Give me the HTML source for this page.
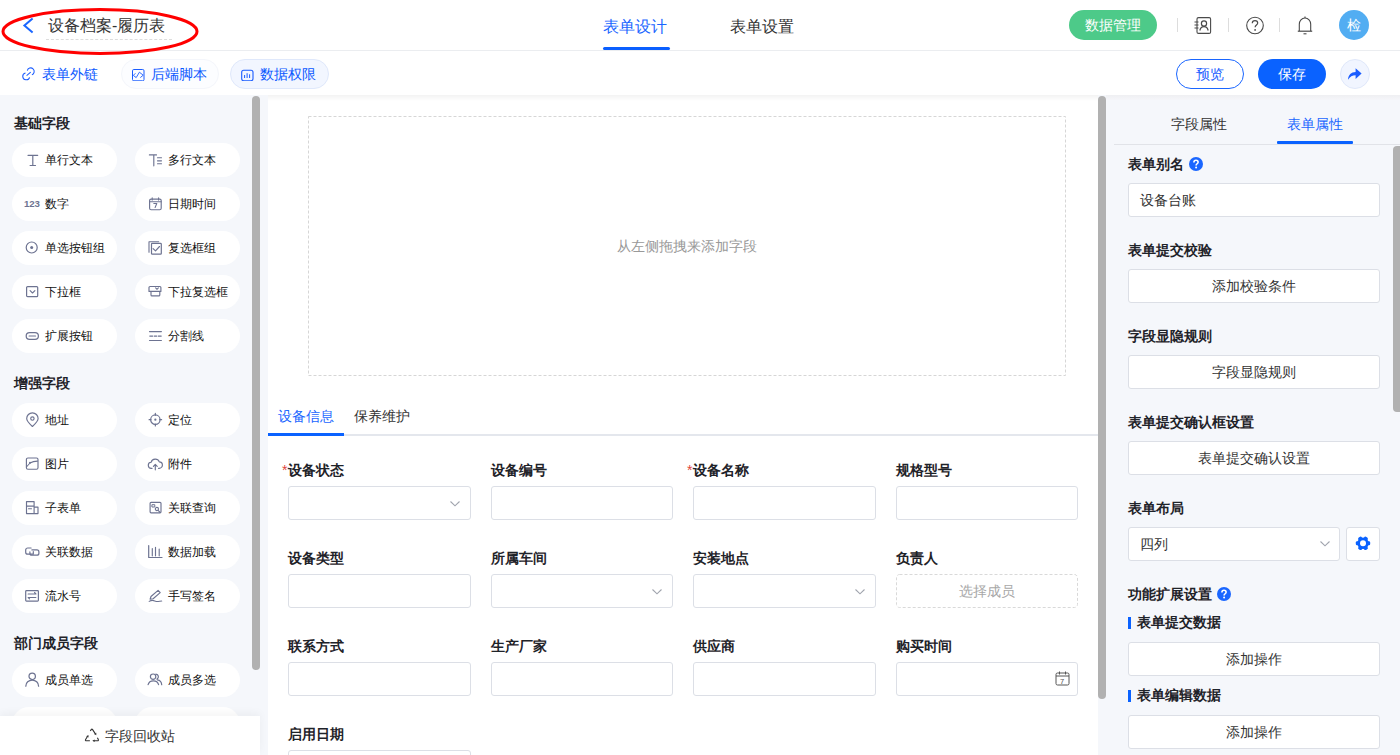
<!DOCTYPE html>
<html><head><meta charset="utf-8">
<style>
*{box-sizing:border-box;margin:0;padding:0}
html,body{width:1400px;height:755px;overflow:hidden;background:#fff;font-family:"Liberation Sans",sans-serif;color:#333}
.abs{position:absolute}
#hdr{position:absolute;left:0;top:0;width:1400px;height:51px;border-bottom:1px solid #ebedf0;background:#fff}
#tb{position:absolute;left:0;top:51px;width:1400px;height:44px;background:#fff}
#left{position:absolute;left:0;top:95px;width:268px;height:660px;background:#f5f7fb}
#mid{position:absolute;left:268px;top:95px;width:830px;height:660px;background:#fff}
#right{position:absolute;left:1098px;top:95px;width:302px;height:660px;background:#f5f7fb}
.sb{position:absolute;background:#b1b1b1;border-radius:4px;width:8px;z-index:5}
.sec{position:absolute;left:14px;font-size:14px;font-weight:bold;color:#1f2329;line-height:20px}
.pill{position:absolute;width:105px;height:34px;border-radius:17px;background:#fff;font-size:12px;color:#111;line-height:34px}
.pill .ic{position:absolute;left:12px;top:9px;width:15px;height:15px;overflow:visible}
.pill span{position:absolute;left:33px;top:0}
.lbl{position:absolute;font-size:14px;font-weight:bold;color:#1f2329;line-height:20px}
.inp{position:absolute;height:34px;border:1px solid #dcdfe6;border-radius:3px;background:#fff}
.rlbl{position:absolute;left:1128px;font-size:14px;font-weight:bold;color:#1f2329;line-height:20px}
.rbtn{position:absolute;left:1128px;width:252px;height:34px;border:1px solid #dcdfe6;border-radius:3px;background:#fff;text-align:center;line-height:32px;font-size:14px;color:#333}
</style></head><body>
<div id="hdr">

<svg class="abs" style="left:22;top:17px;left:22px" width="12" height="17" viewBox="0 0 12 17"><path d="M10.6 1.6 L2.4 8.5 L10.6 15.4" fill="none" stroke="#1a66ff" stroke-width="2"/></svg>
<div class="abs" style="left:48px;top:15px;font-size:16px;line-height:22px;color:#333">设备档案-履历表</div>
<div class="abs" style="left:46px;top:39px;width:126px;border-top:1px dashed #ddd"></div>
<div class="abs" style="left:603px;top:15px;font-size:16.25px;line-height:22px;color:#1a66ff">表单设计</div>
<div class="abs" style="left:603px;top:47px;width:67px;height:3px;border-radius:2px;background:#0a5fff"></div>
<div class="abs" style="left:730px;top:15px;font-size:16.25px;line-height:22px;color:#333">表单设置</div>
<div class="abs" style="left:1069px;top:10px;width:88px;height:30px;border-radius:15px;background:#4dca89;color:#fff;font-size:14px;font-weight:500;line-height:30px;text-align:center">数据管理</div>
<div class="abs" style="left:1177px;top:18px;width:1px;height:14px;background:#ddd"></div>
<div class="abs" style="left:1228px;top:18px;width:1px;height:14px;background:#ddd"></div>
<div class="abs" style="left:1279px;top:18px;width:1px;height:14px;background:#ddd"></div>
<svg class="abs" style="left:1193px;top:16px" width="20" height="19" viewBox="0 0 20 19"><rect x="4" y="1.6" width="13.6" height="15.8" rx="1.5" fill="none" stroke="#4a4a4a" stroke-width="1.1"/><path d="M1.5 6h4M1.5 9h4M1.5 12h4" stroke="#4a4a4a" stroke-width="1.2"/><circle cx="11" cy="7.5" r="2.6" fill="none" stroke="#4a4a4a" stroke-width="1.2"/><path d="M6.8 14.5c0.6-2.6 2.2-3.8 4.2-3.8s3.6 1.2 4.2 3.8" fill="none" stroke="#4a4a4a" stroke-width="1.2"/></svg>
<svg class="abs" style="left:1245px;top:16px" width="20" height="20" viewBox="0 0 20 20"><circle cx="10" cy="9.5" r="8.3" fill="none" stroke="#4a4a4a" stroke-width="1.1"/><path d="M7.3 7.3c0-1.6 1.2-2.6 2.7-2.6s2.7 1 2.7 2.4c0 1.9-2.6 2-2.6 4.2" fill="none" stroke="#4a4a4a" stroke-width="1.2"/><circle cx="10.1" cy="13.9" r="0.9" fill="#4a4a4a"/></svg>
<svg class="abs" style="left:1296px;top:15px" width="18" height="21" viewBox="0 0 18 21"><path d="M9 1.5v1.5" stroke="#4a4a4a" stroke-width="1.1"/><path d="M3.3 16V9.3C3.3 5.6 5.8 3 9 3s5.7 2.6 5.7 6.3V16" fill="none" stroke="#4a4a4a" stroke-width="1.1"/><path d="M1.8 16.2h14.4" stroke="#4a4a4a" stroke-width="1.2"/><path d="M7.5 18.8h3" stroke="#4a4a4a" stroke-width="1.1"/></svg>
<div class="abs" style="left:1339px;top:10px;width:30px;height:30px;border-radius:15px;background:#52adf2;color:#fff;font-size:14px;font-weight:500;line-height:30px;text-align:center">检</div>
</div>
<div id="tb">
<svg class="abs" style="left:18px;top:11px" width="40" height="24" viewBox="0 0 40 24"><path d="M9.3 8.6A3.5 3.5 0 1 1 13.9 12.7M7.5 10.9A3.5 3.5 0 1 0 11.6 15.3M8.6 13.7 12.7 10.2" fill="none" stroke="#1a5cff" stroke-width="1.05"/></svg>
<div class="abs" style="left:42px;top:13px;font-size:14px;line-height:20px;color:#0a58ff">表单外链</div>
<div class="abs" style="left:121px;top:8px;width:98px;height:30px;border-radius:15px;background:#fcfdff;border:1px solid #f4f6fb"></div>
<svg class="abs" style="left:132px;top:17px" width="13" height="13" viewBox="0 0 13 13"><rect x="0.5" y="1.5" width="11.5" height="11.3" rx="1.3" fill="none" stroke="#1a5cff" stroke-width="1"/><path d="M3.4 5.3 1.3 7.4 4.2 9.6 7.4 4.2 11.2 7.2 8.3 9.6" fill="none" stroke="#1a5cff" stroke-width="0.9"/></svg>
<div class="abs" style="left:151px;top:13px;font-size:14px;line-height:20px;color:#0a58ff">后端脚本</div>
<div class="abs" style="left:230px;top:8px;width:99px;height:30px;border-radius:15px;background:#f2f6ff;border:1px solid #dfe8fb"></div>
<svg class="abs" style="left:241px;top:17px" width="13" height="13" viewBox="0 0 13 13"><rect x="0.7" y="2.3" width="11.3" height="10.4" rx="2" fill="none" stroke="#1a5cff" stroke-width="1.1"/><path d="M3.6 7v3M6.1 5.2v4.8M8.6 6.3v3.7" fill="none" stroke="#1a5cff" stroke-width="1"/></svg>
<div class="abs" style="left:260px;top:13px;font-size:14px;line-height:20px;color:#0a58ff">数据权限</div>
<div class="abs" style="left:1176px;top:8px;width:68px;height:30px;border-radius:15px;background:#fff;border:1px solid #1a66ff;color:#1a5cff;font-size:14px;font-weight:500;line-height:28px;text-align:center">预览</div>
<div class="abs" style="left:1258px;top:8px;width:68px;height:30px;border-radius:15px;background:#0a62ff;color:#fff;font-size:14px;font-weight:500;line-height:30px;text-align:center">保存</div>
<div class="abs" style="left:1340px;top:8px;width:30px;height:30px;border-radius:15px;background:#f1f5ff;border:1px solid #e0e8fa"></div>
<svg class="abs" style="left:1347px;top:16px" width="16" height="14" viewBox="0 0 16 14"><path d="M1 12.8C1.3 7.6 4.2 5 8.6 4.9V1.3L14.6 6.6 8.6 11.9V8.3C5.4 8.3 3 9.6 1 12.8Z" fill="#1a5cff"/></svg>
</div>
<!--LEFT--><div id="leftbg" style="position:absolute;left:0;top:95px;width:268px;height:660px;background:#f5f7fb"></div>
<div class="sec" style="top:113px">基础字段</div>
<div class="pill" style="left:12px;top:143px"><svg class="ic" viewBox="0 0 15 15" width="15" height="15"><g transform="translate(0.5 0.5)"><path d="M3.5 2.8H13.2M8.3 2.8V13M5.6 13H11" fill="none" stroke="#6d7391" stroke-width="1.2" stroke-linecap="round" stroke-linejoin="round"/></g></svg><span>单行文本</span></div>
<div class="pill" style="left:135px;top:143px"><svg class="ic" viewBox="0 0 15 15" width="15" height="15"><g transform="translate(0.5 0.5)"><path d="M1.9 2.4H9M6.3 2.4V13.3M10 5.2H14M10 8.3H14M10 11.2H14" fill="none" stroke="#6d7391" stroke-width="1.15" stroke-linecap="round" stroke-linejoin="round"/></g></svg><span>多行文本</span></div>
<div class="pill" style="left:12px;top:187px"><div style="position:absolute;left:12px;top:-0.5px;font-family:Liberation Sans;font-weight:bold;font-size:9.7px;line-height:34px;color:#6d7391;letter-spacing:-0.2px">123</div><span>数字</span></div>
<div class="pill" style="left:135px;top:187px"><svg class="ic" viewBox="0 0 15 15" width="15" height="15"><g transform="translate(0.5 0.5)"><rect x="2.1" y="2.6" width="11.6" height="10.6" rx="1.5" fill="none" stroke="#6d7391" stroke-width="1.15"/><path d="M4.7 1.2V3.6M11.1 1.2V3.6M2.1 5.2H13.7M6.3 7H9.3L7.6 11" fill="none" stroke="#6d7391" stroke-width="1.05" stroke-linecap="round" stroke-linejoin="round"/></g></svg><span>日期时间</span></div>
<div class="pill" style="left:12px;top:231px"><svg class="ic" viewBox="0 0 15 15" width="15" height="15"><g transform="translate(0.5 0.5)"><circle cx="7.2" cy="7" r="5.5" fill="none" stroke="#6d7391" stroke-width="1.2"/><circle cx="7.2" cy="7" r="1.5" fill="#6d7391"/></g></svg><span>单选按钮组</span></div>
<div class="pill" style="left:135px;top:231px"><svg class="ic" viewBox="0 0 15 15" width="15" height="15"><g transform="translate(0.5 0.5)"><path d="M1.5 11.8V1.2H11.2" fill="none" stroke="#6d7391" stroke-width="1.1" stroke-linecap="round" stroke-linejoin="round"/><rect x="4" y="2.9" width="9.8" height="10.8" rx="0.8" fill="none" stroke="#6d7391" stroke-width="1.2"/><path d="M5.6 8.2 8 10.4 12 6" fill="none" stroke="#6d7391" stroke-width="1.15" stroke-linecap="round" stroke-linejoin="round"/></g></svg><span>复选框组</span></div>
<div class="pill" style="left:12px;top:275px"><svg class="ic" viewBox="0 0 15 15" width="15" height="15"><g transform="translate(0.5 0.5)"><rect x="2.1" y="2.1" width="11.1" height="10.1" rx="1" fill="none" stroke="#6d7391" stroke-width="1.2"/><path d="M5.6 6.2 8 8.5 10.4 6.2" fill="none" stroke="#6d7391" stroke-width="1.1" stroke-linecap="round" stroke-linejoin="round"/></g></svg><span>下拉框</span></div>
<div class="pill" style="left:135px;top:275px"><svg class="ic" viewBox="0 0 15 15" width="15" height="15"><g transform="translate(0.5 0.5)"><path d="M2.5 2H12.4A1 1 0 0 1 13.4 3V6.9H1.5V3A1 1 0 0 1 2.5 2ZM3.5 6.9V10.4A1 1 0 0 0 4.5 11.4H11.3A1 1 0 0 0 12.3 10.4V6.9" fill="none" stroke="#6d7391" stroke-width="1.15" stroke-linecap="round" stroke-linejoin="round"/><path d="M8.1 3.4 9.5 4.8 10.9 3.4" fill="none" stroke="#6d7391" stroke-width="1.05" stroke-linecap="round" stroke-linejoin="round"/></g></svg><span>下拉复选框</span></div>
<div class="pill" style="left:12px;top:319px"><svg class="ic" viewBox="0 0 15 15" width="15" height="15"><g transform="translate(0.5 0.5)"><rect x="1.7" y="4.1" width="12.2" height="6.8" rx="3.4" fill="none" stroke="#6d7391" stroke-width="1.25"/><path d="M4.6 7.5H11" fill="none" stroke="#6d7391" stroke-width="1.2" stroke-linecap="round" stroke-linejoin="round"/></g></svg><span>扩展按钮</span></div>
<div class="pill" style="left:135px;top:319px"><svg class="ic" viewBox="0 0 15 15" width="15" height="15"><g transform="translate(0.5 0.5)"><path d="M2 3.1H13.9M2 12H13.9" fill="none" stroke="#6d7391" stroke-width="1.2" stroke-linecap="round" stroke-linejoin="round"/><path d="M2.3 7.6H5.2M6.8 7.6H9.2M10.8 7.6H13.7" fill="none" stroke="#6d7391" stroke-width="1.2" stroke-linecap="round" stroke-linejoin="round"/></g></svg><span>分割线</span></div>
<div class="sec" style="top:373px">增强字段</div>
<div class="pill" style="left:12px;top:403px"><svg class="ic" viewBox="0 0 15 15" width="15" height="15"><g transform="translate(0.5 0.5)"><path d="M7.9 14C4 10.4 2.2 8.2 2.2 6A5.7 5.7 0 0 1 13.6 6C13.6 8.2 11.8 10.4 7.9 14Z" fill="none" stroke="#6d7391" stroke-width="1.15" stroke-linecap="round" stroke-linejoin="round"/><circle cx="7.9" cy="6" r="1.7" fill="none" stroke="#6d7391" stroke-width="1.15"/></g></svg><span>地址</span></div>
<div class="pill" style="left:135px;top:403px"><svg class="ic" viewBox="0 0 15 15" width="15" height="15"><g transform="translate(0.5 0.5)"><circle cx="7.85" cy="7.15" r="4.7" fill="none" stroke="#6d7391" stroke-width="1.2"/><circle cx="7.85" cy="7.15" r="1.1" fill="#6d7391"/><path d="M7.85 0.9V2.8M7.85 11.5V13.4M1.6 7.15H3.5M12.2 7.15H14.1" fill="none" stroke="#6d7391" stroke-width="1.2" stroke-linecap="round" stroke-linejoin="round"/></g></svg><span>定位</span></div>
<div class="pill" style="left:12px;top:447px"><svg class="ic" viewBox="0 0 15 15" width="15" height="15"><g transform="translate(0.5 0.5)"><rect x="1.9" y="1.5" width="11.6" height="11.2" rx="1.5" fill="none" stroke="#6d7391" stroke-width="1.15"/><path d="M2.4 10 5.5 6.5Q8.5 4.6 13 4.6" fill="none" stroke="#6d7391" stroke-width="1.05" stroke-linecap="round" stroke-linejoin="round"/><circle cx="5.5" cy="6.3" r="1" fill="#6d7391"/></g></svg><span>图片</span></div>
<div class="pill" style="left:135px;top:447px"><svg class="ic" viewBox="0 0 15 15" width="15" height="15"><g transform="translate(0.5 0.5)"><path d="M4.6 11.8H4A3 3 0 0 1 3.6 5.8 4.3 4.3 0 0 1 11.8 5.4 3.2 3.2 0 0 1 11.6 11.8H11" fill="none" stroke="#6d7391" stroke-width="1.15" stroke-linecap="round" stroke-linejoin="round"/><path d="M7.8 13.3V8M5.9 9.8 7.8 7.9 9.7 9.8" fill="none" stroke="#6d7391" stroke-width="1.15" stroke-linecap="round" stroke-linejoin="round"/></g></svg><span>附件</span></div>
<div class="pill" style="left:12px;top:491px"><svg class="ic" viewBox="0 0 15 15" width="15" height="15"><g transform="translate(0.5 0.5)"><path d="M2 1.1H9.6V13.1H2ZM2 5.6H9.6M4 8.2H7M9.6 6.6H13.5V13.1H9.6" fill="none" stroke="#6d7391" stroke-width="1.15" stroke-linecap="round" stroke-linejoin="round"/></g></svg><span>子表单</span></div>
<div class="pill" style="left:135px;top:491px"><svg class="ic" viewBox="0 0 15 15" width="15" height="15"><g transform="translate(0.5 0.5)"><rect x="2.6" y="1.8" width="10.9" height="10.5" rx="1" fill="none" stroke="#6d7391" stroke-width="1.15"/><path d="M4.8 4.2H7.3V6.5H4.8Z" fill="none" stroke="#6d7391" stroke-width="1" stroke-linecap="round" stroke-linejoin="round"/><circle cx="9.4" cy="8.5" r="1.6" fill="none" stroke="#6d7391" stroke-width="1.1"/><path d="M10.6 9.8 12.8 12" fill="none" stroke="#6d7391" stroke-width="1.1" stroke-linecap="round" stroke-linejoin="round"/></g></svg><span>关联查询</span></div>
<div class="pill" style="left:12px;top:535px"><svg class="ic" viewBox="0 0 15 15" width="15" height="15"><g transform="translate(0.5 0.5)"><path d="M6.6 3.5H3.2A2 2 0 0 0 1.2 5.5V7.7A2 2 0 0 0 3.2 9.7H8.8V7" fill="none" stroke="#6d7391" stroke-width="1.2" stroke-linecap="round" stroke-linejoin="round"/><path d="M7.4 5.4H12.4A2 2 0 0 1 14.4 7.4V8.7A2 2 0 0 1 12.4 10.7H7.4A2 2 0 0 1 5.4 8.7V7.4" fill="none" stroke="#6d7391" stroke-width="1.2" stroke-linecap="round" stroke-linejoin="round"/></g></svg><span>关联数据</span></div>
<div class="pill" style="left:135px;top:535px"><svg class="ic" viewBox="0 0 15 15" width="15" height="15"><g transform="translate(0.5 0.5)"><path d="M1.2 1.1V13H14.5" fill="none" stroke="#6d7391" stroke-width="1.2" stroke-linecap="round" stroke-linejoin="round"/><path d="M4.8 4V11.3M8 2.7V11.3M11.7 4.5V11.3" fill="none" stroke="#6d7391" stroke-width="1.15" stroke-linecap="round" stroke-linejoin="round"/></g></svg><span>数据加载</span></div>
<div class="pill" style="left:12px;top:579px"><svg class="ic" viewBox="0 0 15 15" width="15" height="15"><g transform="translate(0.5 0.5)"><rect x="1.2" y="2.2" width="12.7" height="10.4" rx="0.8" fill="none" stroke="#6d7391" stroke-width="1.2"/><path d="M3.6 5.4H11.5L10 4M11.4 9H3.6L5.1 10.4" fill="none" stroke="#6d7391" stroke-width="1.05" stroke-linecap="round" stroke-linejoin="round"/></g></svg><span>流水号</span></div>
<div class="pill" style="left:135px;top:579px"><svg class="ic" viewBox="0 0 15 15" width="15" height="15"><g transform="translate(0.5 0.5)"><path d="M2.6 10.7 3.5 8 10.6 1.9 12.7 4.1 5.6 10.2Z" fill="none" stroke="#6d7391" stroke-width="1.15" stroke-linecap="round" stroke-linejoin="round"/><path d="M1.7 12.9Q4.5 11.2 7.2 12.4Q10 13.6 14.2 12.6" fill="none" stroke="#6d7391" stroke-width="1.05" stroke-linecap="round" stroke-linejoin="round"/></g></svg><span>手写签名</span></div>
<div class="sec" style="top:633px">部门成员字段</div>
<div class="pill" style="left:12px;top:663px"><svg class="ic" viewBox="0 0 15 15" width="15" height="15"><g transform="translate(0.5 0.5)"><circle cx="7.7" cy="3.8" r="3.2" fill="none" stroke="#6d7391" stroke-width="1.25"/><path d="M1.3 13.7A6.4 6.2 0 0 1 14.1 13.7" fill="none" stroke="#6d7391" stroke-width="1.25" stroke-linecap="round" stroke-linejoin="round"/></g></svg><span>成员单选</span></div>
<div class="pill" style="left:135px;top:663px"><svg class="ic" viewBox="0 0 15 15" width="15" height="15"><g transform="translate(0.5 0.5)"><circle cx="5.6" cy="4.2" r="2.7" fill="none" stroke="#6d7391" stroke-width="1.2"/><path d="M8.4 1.7A2.6 2.6 0 0 1 9.5 6.6M0.6 12.2A5.4 5.1 0 0 1 11.1 12.2M9.9 7.4A5 5.3 0 0 1 14.2 12.2" fill="none" stroke="#6d7391" stroke-width="1.2" stroke-linecap="round" stroke-linejoin="round"/></g></svg><span>成员多选</span></div>
<div class="pill" style="left:12px;top:707px"><svg class="ic" viewBox="0 0 15 15" width="15" height="15"><g transform="translate(0.5 0.5)"><circle cx="7.7" cy="3.8" r="3.2" fill="none" stroke="#6d7391" stroke-width="1.25"/><path d="M1.3 13.7A6.4 6.2 0 0 1 14.1 13.7" fill="none" stroke="#6d7391" stroke-width="1.25" stroke-linecap="round" stroke-linejoin="round"/></g></svg><span>部门单选</span></div>
<div class="pill" style="left:135px;top:707px"><svg class="ic" viewBox="0 0 15 15" width="15" height="15"><g transform="translate(0.5 0.5)"><circle cx="5.6" cy="4.2" r="2.7" fill="none" stroke="#6d7391" stroke-width="1.2"/><path d="M8.4 1.7A2.6 2.6 0 0 1 9.5 6.6M0.6 12.2A5.4 5.1 0 0 1 11.1 12.2M9.9 7.4A5 5.3 0 0 1 14.2 12.2" fill="none" stroke="#6d7391" stroke-width="1.2" stroke-linecap="round" stroke-linejoin="round"/></g></svg><span>部门多选</span></div>
<div class="sb" style="left:252px;top:96px;height:574px"></div>
<div class="abs" style="left:0;top:716px;width:260px;height:39px;background:#fff;box-shadow:0 -3px 8px rgba(0,0,0,0.045)"></div>
<svg class="abs" style="left:84px;top:728px" width="16" height="15" viewBox="0 0 16 15"><path d="M6.3 3 7.2 1.6Q7.9 0.6 8.6 1.6L11.4 5.9M13.4 9.7 14.2 11.3Q14.9 12.8 13.4 12.8H9.6M5.9 12.8H2.5Q0.9 12.8 1.6 11.4L3.6 8.3" fill="none" stroke="#333" stroke-width="1.1"/><path d="M12.3 7.2 12.3 4.7 10 6ZM8.3 12.8 10.6 11.5V14.1ZM4.4 7 4.6 9.6 2.2 8.3Z" fill="#333"/></svg>
<div class="abs" style="left:105px;top:726px;font-size:14px;line-height:20px;color:#333">字段回收站</div><!--/LEFT-->

<div class="abs" style="left:268px;top:95px;width:830px;height:660px;background:#fff"></div>
<div class="abs" style="left:268px;top:95px;width:830px;height:6px;background:linear-gradient(#f3f3f3,#fff)"></div>
<svg class="abs" style="left:308px;top:116px" width="758" height="260"><rect x="0.5" y="0.5" width="757" height="259" fill="none" stroke="#d6d6d6" stroke-dasharray="3 2"/></svg>
<div class="abs" style="left:308px;top:235px;width:758px;text-align:center;font-size:14px;line-height:22px;color:#999">从左侧拖拽来添加字段</div>
<div class="abs" style="left:268px;top:434px;width:830px;height:2px;background:#e4e7ed"></div>
<div class="abs" style="left:268px;top:433px;width:76px;height:3px;background:#0a62ff"></div>
<div class="abs" style="left:278px;top:405px;font-size:14px;line-height:22px;color:#1a66ff">设备信息</div>
<div class="abs" style="left:354px;top:405px;font-size:14px;line-height:22px;color:#333">保养维护</div>
<div class="lbl" style="left:282px;top:460px"><span style="color:#e0453a;font-weight:normal;margin-right:1px">*</span>设备状态</div>
<div class="inp" style="left:288px;top:486px;width:183px"></div>
<svg class="abs" style="left:449px;top:500px" width="12" height="8" viewBox="0 0 12 8"><path d="M1.5 1.5 6 5.8 10.5 1.5" fill="none" stroke="#a0a4ad" stroke-width="1.1"/></svg>
<div class="lbl" style="left:491px;top:460px">设备编号</div>
<div class="inp" style="left:491px;top:486px;width:182px"></div>
<div class="lbl" style="left:687px;top:460px"><span style="color:#e0453a;font-weight:normal;margin-right:1px">*</span>设备名称</div>
<div class="inp" style="left:693px;top:486px;width:183px"></div>
<div class="lbl" style="left:896px;top:460px">规格型号</div>
<div class="inp" style="left:896px;top:486px;width:182px"></div>
<div class="lbl" style="left:288px;top:548px">设备类型</div>
<div class="inp" style="left:288px;top:574px;width:183px"></div>
<div class="lbl" style="left:491px;top:548px">所属车间</div>
<div class="inp" style="left:491px;top:574px;width:182px"></div>
<svg class="abs" style="left:651px;top:588px" width="12" height="8" viewBox="0 0 12 8"><path d="M1.5 1.5 6 5.8 10.5 1.5" fill="none" stroke="#a0a4ad" stroke-width="1.1"/></svg>
<div class="lbl" style="left:693px;top:548px">安装地点</div>
<div class="inp" style="left:693px;top:574px;width:183px"></div>
<svg class="abs" style="left:854px;top:588px" width="12" height="8" viewBox="0 0 12 8"><path d="M1.5 1.5 6 5.8 10.5 1.5" fill="none" stroke="#a0a4ad" stroke-width="1.1"/></svg>
<div class="lbl" style="left:896px;top:548px">负责人</div>
<svg class="abs" style="left:896px;top:574px" width="182" height="34"><rect x="0.5" y="0.5" width="181" height="33" rx="3" fill="#fff" stroke="#d9d9d9" stroke-dasharray="3 2"/></svg>
<div class="abs" style="left:896px;top:574px;width:182px;line-height:34px;text-align:center;font-size:14px;color:#a8a8a8">选择成员</div>
<div class="lbl" style="left:288px;top:636px">联系方式</div>
<div class="inp" style="left:288px;top:662px;width:183px"></div>
<div class="lbl" style="left:491px;top:636px">生产厂家</div>
<div class="inp" style="left:491px;top:662px;width:182px"></div>
<div class="lbl" style="left:693px;top:636px">供应商</div>
<div class="inp" style="left:693px;top:662px;width:183px"></div>
<div class="lbl" style="left:896px;top:636px">购买时间</div>
<div class="inp" style="left:896px;top:662px;width:182px"></div>
<svg class="abs" style="left:1055px;top:671px" width="15" height="15" viewBox="0 0 15 15"><rect x="1" y="2" width="13" height="12" rx="1.5" fill="none" stroke="#555" stroke-width="1"/><path d="M1 5h13M4.5 0.5v3M10.5 0.5v3" stroke="#555" stroke-width="1"/><text x="5" y="12.5" font-size="7.5" fill="#555" font-family="Liberation Sans">7</text></svg>
<div class="lbl" style="left:288px;top:724px">启用日期</div>
<div class="inp" style="left:288px;top:750px;width:183px"></div>
<div class="sb" style="left:1098px;top:96px;height:603px"></div>
<div class="abs" style="left:1098px;top:95px;width:302px;height:660px;background:#f5f7fb"></div>
<div class="abs" style="left:1106px;top:95px;width:294px;height:5px;background:linear-gradient(#efeff2,#f5f6fa)"></div>
<div class="abs" style="left:1171px;top:113px;font-size:14px;line-height:22px;color:#333">字段属性</div>
<div class="abs" style="left:1287px;top:113px;font-size:14px;line-height:22px;color:#1a66ff">表单属性</div>
<div class="abs" style="left:1114px;top:144px;width:286px;height:1px;background:#e1e3e8"></div>
<div class="abs" style="left:1277px;top:141px;width:76px;height:3px;background:#0a62ff;border-radius:1px"></div>
<div class="rlbl" style="top:154px">表单别名</div><svg class="abs" style="left:1189px;top:157px" width="14" height="14" viewBox="0 0 14 14"><circle cx="7" cy="7" r="7" fill="#1a66ff"/><path d="M4.9 5.4c0-1.3.9-2.1 2.1-2.1s2.1.8 2.1 1.9c0 1.5-2 1.6-2 3.2" fill="none" stroke="#fff" stroke-width="1.6"/><circle cx="7.1" cy="10.6" r="1" fill="#fff"/></svg>
<div class="rbtn" style="top:183px;text-align:left;padding-left:11px">设备台账</div>
<div class="rlbl" style="top:240px">表单提交校验</div>
<div class="rbtn" style="top:269px">添加校验条件</div>
<div class="rlbl" style="top:326px">字段显隐规则</div>
<div class="rbtn" style="top:355px">字段显隐规则</div>
<div class="rlbl" style="top:412px">表单提交确认框设置</div>
<div class="rbtn" style="top:441px">表单提交确认设置</div>
<div class="rlbl" style="top:498px">表单布局</div>
<div class="rbtn" style="top:527px;width:212px;text-align:left;padding-left:11px">四列</div>
<svg class="abs" style="left:1319px;top:540px" width="12" height="8" viewBox="0 0 12 8"><path d="M1.5 1.5 6 5.8 10.5 1.5" fill="none" stroke="#a0a4ad" stroke-width="1.1"/></svg>
<div class="rbtn" style="top:527px;left:1346px;width:34px"></div>
<svg class="abs" style="left:1353px;top:533px" width="20" height="20" viewBox="0 0 20 20"><g transform="translate(10 10.3)" fill="#0a62ff"><circle r="5.8"/><rect x="3.8" y="-2" width="3.4" height="4" rx="1.3" transform="rotate(0)"/><rect x="3.8" y="-2" width="3.4" height="4" rx="1.3" transform="rotate(60)"/><rect x="3.8" y="-2" width="3.4" height="4" rx="1.3" transform="rotate(120)"/><rect x="3.8" y="-2" width="3.4" height="4" rx="1.3" transform="rotate(180)"/><rect x="3.8" y="-2" width="3.4" height="4" rx="1.3" transform="rotate(240)"/><rect x="3.8" y="-2" width="3.4" height="4" rx="1.3" transform="rotate(300)"/><circle r="3" fill="#fff"/></g></svg>
<div class="rlbl" style="top:584px">功能扩展设置</div><svg class="abs" style="left:1217px;top:587px" width="14" height="14" viewBox="0 0 14 14"><circle cx="7" cy="7" r="7" fill="#1a66ff"/><path d="M4.9 5.4c0-1.3.9-2.1 2.1-2.1s2.1.8 2.1 1.9c0 1.5-2 1.6-2 3.2" fill="none" stroke="#fff" stroke-width="1.6"/><circle cx="7.1" cy="10.6" r="1" fill="#fff"/></svg>
<div class="abs" style="left:1128px;top:617px;width:3px;height:12px;background:#0a62ff"></div>
<div class="rlbl" style="top:612px;left:1137px">表单提交数据</div>
<div class="rbtn" style="top:642px">添加操作</div>
<div class="abs" style="left:1128px;top:690px;width:3px;height:12px;background:#0a62ff"></div>
<div class="rlbl" style="top:685px;left:1137px">表单编辑数据</div>
<div class="rbtn" style="top:715px">添加操作</div>
<div class="sb" style="left:1393px;top:146px;height:266px;width:7px;border-radius:4px 0 0 4px"></div>
<svg class="abs" style="left:0;top:0;z-index:10" width="210" height="62" viewBox="0 0 210 62"><ellipse cx="100" cy="31.5" rx="97" ry="22" fill="none" stroke="#f00" stroke-width="3"/></svg>
</body></html>
